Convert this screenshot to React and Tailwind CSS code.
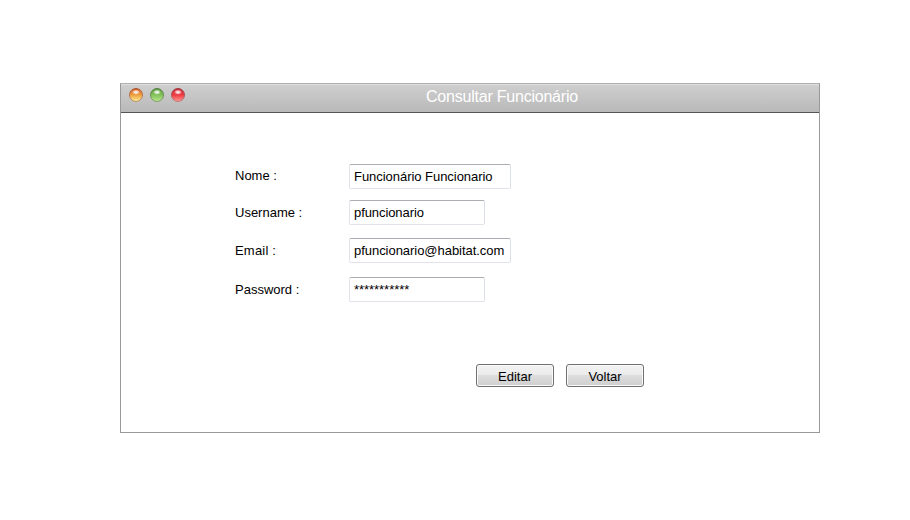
const fields = [
  { label: 'Nome :', value: 'Funcionário Funcionario', box: 'w-[162px] tracking-[-0.04px]', row: '', line: 'leading-6' },
  { label: 'Username :', value: 'pfuncionario', box: 'w-[136px] tracking-[-0.08px]', row: 'mt-[11px]', line: 'leading-[26px]' },
  { label: 'Email :', value: 'pfuncionario@habitat.com', box: 'w-[162px] tracking-[-0.04px]', row: 'mt-[13px]', line: 'leading-[26px] tracking-[0.2px]' },
  { label: 'Password :', value: '***********', box: 'w-[136px] tracking-[-0.04px]', row: 'mt-[14px]', line: 'leading-[26px]' },
];

const lights = [
  { id: 'amber', rimTop: '#a84a2c', rimBottom: '#b58a62', top: '#d0602c', mid: '#f0a040', low: '#fff09a' },
  { id: 'green', rimTop: '#4a7838', rimBottom: '#7a9a68', top: '#5c9840', mid: '#84c25a', low: '#bce890' },
  { id: 'red', rimTop: '#983038', rimBottom: '#b87474', top: '#c83038', mid: '#f03a42', low: '#ff9c94' },
];

function Light({ id, rimTop, rimBottom, top, mid, low }) {
  return (
    <svg width="14" height="14" viewBox="0 0 14 14" className="block">
      <defs>
        <linearGradient id={id} x1="0" y1="0" x2="0" y2="1">
          <stop offset="0" stopColor={top} />
          <stop offset="0.5" stopColor={mid} />
          <stop offset="1" stopColor={low} />
        </linearGradient>
        <linearGradient id={id + '-rim'} x1="0" y1="0" x2="0" y2="1">
          <stop offset="0" stopColor={rimTop} />
          <stop offset="1" stopColor={rimBottom} />
        </linearGradient>
        <radialGradient id={id + '-shine'}>
          <stop offset="0" stopColor="#fff" stopOpacity="1" />
          <stop offset="0.4" stopColor="#fff" stopOpacity="0.75" />
          <stop offset="1" stopColor="#fff" stopOpacity="0" />
        </radialGradient>
      </defs>
      <circle cx="7" cy="7" r="6.5" fill={`url(#${id})`} stroke={`url(#${id}-rim)`} strokeWidth="0.9" />
      <ellipse cx="7" cy="4.2" rx="4" ry="2.6" fill={`url(#${id}-shine)`} />
    </svg>
  );
}

function Button({ children }) {
  return (
    <button className="h-[23px] w-[78px] rounded-[3px] border border-[#707070] bg-[linear-gradient(#f2f2f2,#ebebeb_50%,#dddddd_50%,#cfcfcf)] p-0 text-center text-[13px] leading-[21px] shadow-[inset_0_0_0_1px_#fafafa]">
      <span className="relative top-px">{children}</span>
    </button>
  );
}

export default function App() {
  return (
    <div className="h-[520px] w-[910px] bg-white pt-[83px] pl-[120px] font-['Liberation_Sans',Arial,sans-serif] text-[13px] text-black">
      <main className="h-[350px] w-[700px] border border-[#999999] border-t-[#b0b0b0] bg-white">
        <header className="flex h-[29px] border-b border-[#555555] bg-linear-to-b from-[#cfcfcf] to-[#b9b9b9] shadow-[inset_0_1px_0_#dedede]">
          <div className="flex w-[64px] gap-[7px] pt-1 pl-2">
            {lights.map((l) => (
              <Light key={l.id} {...l} />
            ))}
          </div>
          <h1 className="w-[634px] pl-[241px] text-[16px] leading-[26px] tracking-[-0.22px] whitespace-nowrap text-white">
            Consultar Funcionário
          </h1>
        </header>
        <form className="pt-[51px] pl-[114px]">
          {fields.map((f) => (
            <div key={f.label} className={`flex h-[25px] ${f.row}`}>
              <label className={`w-[114px] ${f.line}`}>{f.label}</label>
              <div
                className={`h-[25px] rounded-[2px] border border-[#e2e3ea] border-t-[#abadb3] border-r-[#dbdfe6] bg-white pl-1 leading-[24px] whitespace-nowrap ${f.box}`}
              >
                {f.value}
              </div>
            </div>
          ))}
        </form>
        <div className="mt-[62px] flex gap-3 pl-[355px]">
          <Button>Editar</Button>
          <Button>Voltar</Button>
        </div>
      </main>
    </div>
  );
}
